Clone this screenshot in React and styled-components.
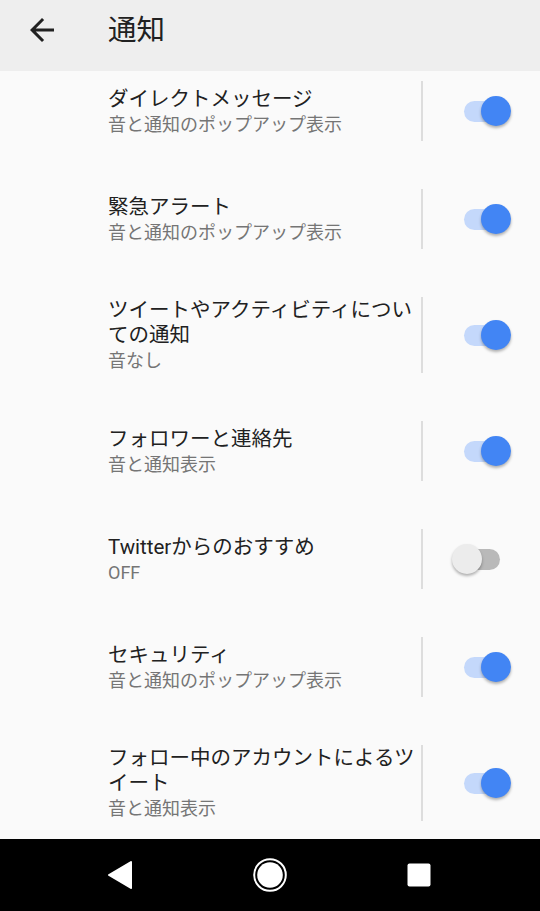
import React from 'react'
import styled, { createGlobalStyle } from 'styled-components'

const GlobalStyle = createGlobalStyle`
    html, body {
        margin: 0;
        padding: 0;
        background: #fafafa;
    }
    body {
        font-family: Roboto, "Noto Sans CJK JP", sans-serif;
    }
`

const settings = [
    { title: 'ダイレクトメッセージ', summary: '音と通知のポップアップ表示', on: true },
    { title: '緊急アラート', summary: '音と通知のポップアップ表示', on: true },
    { title: 'ツイートやアクティビティについての通知', summary: '音なし', on: true },
    { title: 'フォロワーと連絡先', summary: '音と通知表示', on: true },
    { title: 'Twitterからのおすすめ', summary: 'OFF', on: false },
    { title: 'セキュリティ', summary: '音と通知のポップアップ表示', on: true },
    { title: 'フォロー中のアカウントによるツイート', summary: '音と通知表示', on: true },
]

function Switch({ on }) {
    return (
        <Track on={on ? 1 : 0}>
            <Thumb on={on ? 1 : 0} />
        </Track>
    )
}

function App() {
    return (
        <Screen>
            <GlobalStyle />
            <Header>
                <BackButton>
                    <svg width="36" height="36" viewBox="0 0 24 24">
                        <path fill="#212121" d="M20 11H7.83l5.59-5.59L12 4l-8 8 8 8 1.41-1.41L7.83 13H20v-2z" />
                    </svg>
                </BackButton>
                <Title>通知</Title>
            </Header>
            <List>
                {settings.map((item) => (
                    <Row key={item.title}>
                        <Text>
                            <ItemTitle>{item.title}</ItemTitle>
                            <Summary>{item.summary}</Summary>
                        </Text>
                        <Divider />
                        <SwitchCell>
                            <Switch on={item.on} />
                        </SwitchCell>
                    </Row>
                ))}
            </List>
            <NavBar>
                <NavButton>
                    <svg width="26" height="30" viewBox="0 0 26 30">
                        <path fill="#fff" stroke="#fff" strokeWidth="2" strokeLinejoin="round" d="M24 2 L2 15 L24 28 Z" />
                    </svg>
                </NavButton>
                <NavButton>
                    <svg width="34" height="34" viewBox="0 0 34 34">
                        <circle cx="17" cy="17" r="15.8" fill="none" stroke="#fff" strokeWidth="2" />
                        <circle cx="17" cy="17" r="12.8" fill="#fff" />
                    </svg>
                </NavButton>
                <NavButton>
                    <svg width="24" height="24" viewBox="0 0 24 24">
                        <rect x="0.5" y="0.5" width="23" height="23" rx="2" fill="#fff" />
                    </svg>
                </NavButton>
            </NavBar>
        </Screen>
    )
}

export default App

const Screen = styled.div`
    display: flex;
    flex-direction: column;
    height: 100vh;
    overflow: hidden;
    background: #fafafa;
`

const Header = styled.div`
    display: flex;
    align-items: center;
    height: 71px;
    box-sizing: border-box;
    padding-bottom: 12px;
    background: #eeeeee;
    flex-shrink: 0;
`

const BackButton = styled.div`
    display: flex;
    align-items: center;
    justify-content: center;
    width: 36px;
    height: 36px;
    margin-left: 24px;
`

const Title = styled.div`
    margin: 3px 0 0 48px;
    font-size: 28.5px;
    color: #212121;
    line-height: 36px;
`

const List = styled.div`
    flex: 1;
    overflow: hidden;
    display: flex;
    flex-direction: column;
    gap: 48px;
    padding-top: 10px;
`

const Row = styled.div`
    display: flex;
    align-items: stretch;
    min-height: 60px;
    flex-shrink: 0;
`

const Text = styled.div`
    flex: 1;
    display: flex;
    flex-direction: column;
    justify-content: center;
    padding: 1px 6px 0 108px;
`

const ItemTitle = styled.div`
    font-size: 20.5px;
    line-height: 25px;
    color: #212121;
`

const Summary = styled.div`
    margin-top: 1px;
    font-size: 18px;
    line-height: 24px;
    color: #757575;
`

const Divider = styled.div`
    width: 2px;
    background: #dddddd;
`

const SwitchCell = styled.div`
    width: 117px;
    display: flex;
    align-items: center;
    justify-content: center;
`

const Track = styled.div`
    position: relative;
    width: 36px;
    height: 21px;
    border-radius: 10.5px;
    background: ${(p) => (p.on ? '#c4d8fb' : '#b9b9b9')};
`

const Thumb = styled.div`
    position: absolute;
    top: -4.5px;
    left: ${(p) => (p.on ? '17.5px' : '-12px')};
    width: 30px;
    height: 30px;
    border-radius: 50%;
    background: ${(p) => (p.on ? '#4285f4' : '#ececec')};
    box-shadow: 0 2px 3px rgba(0, 0, 0, 0.3);
`

const NavBar = styled.div`
    display: flex;
    align-items: center;
    justify-content: space-between;
    height: 72px;
    flex-shrink: 0;
    padding: 0 107px 0 106px;
    background: #000000;
`

const NavButton = styled.div`
    display: flex;
    align-items: center;
    justify-content: center;
    width: 28px;
    height: 34px;
    &:nth-child(2) {
        width: 34px;
    }
`
